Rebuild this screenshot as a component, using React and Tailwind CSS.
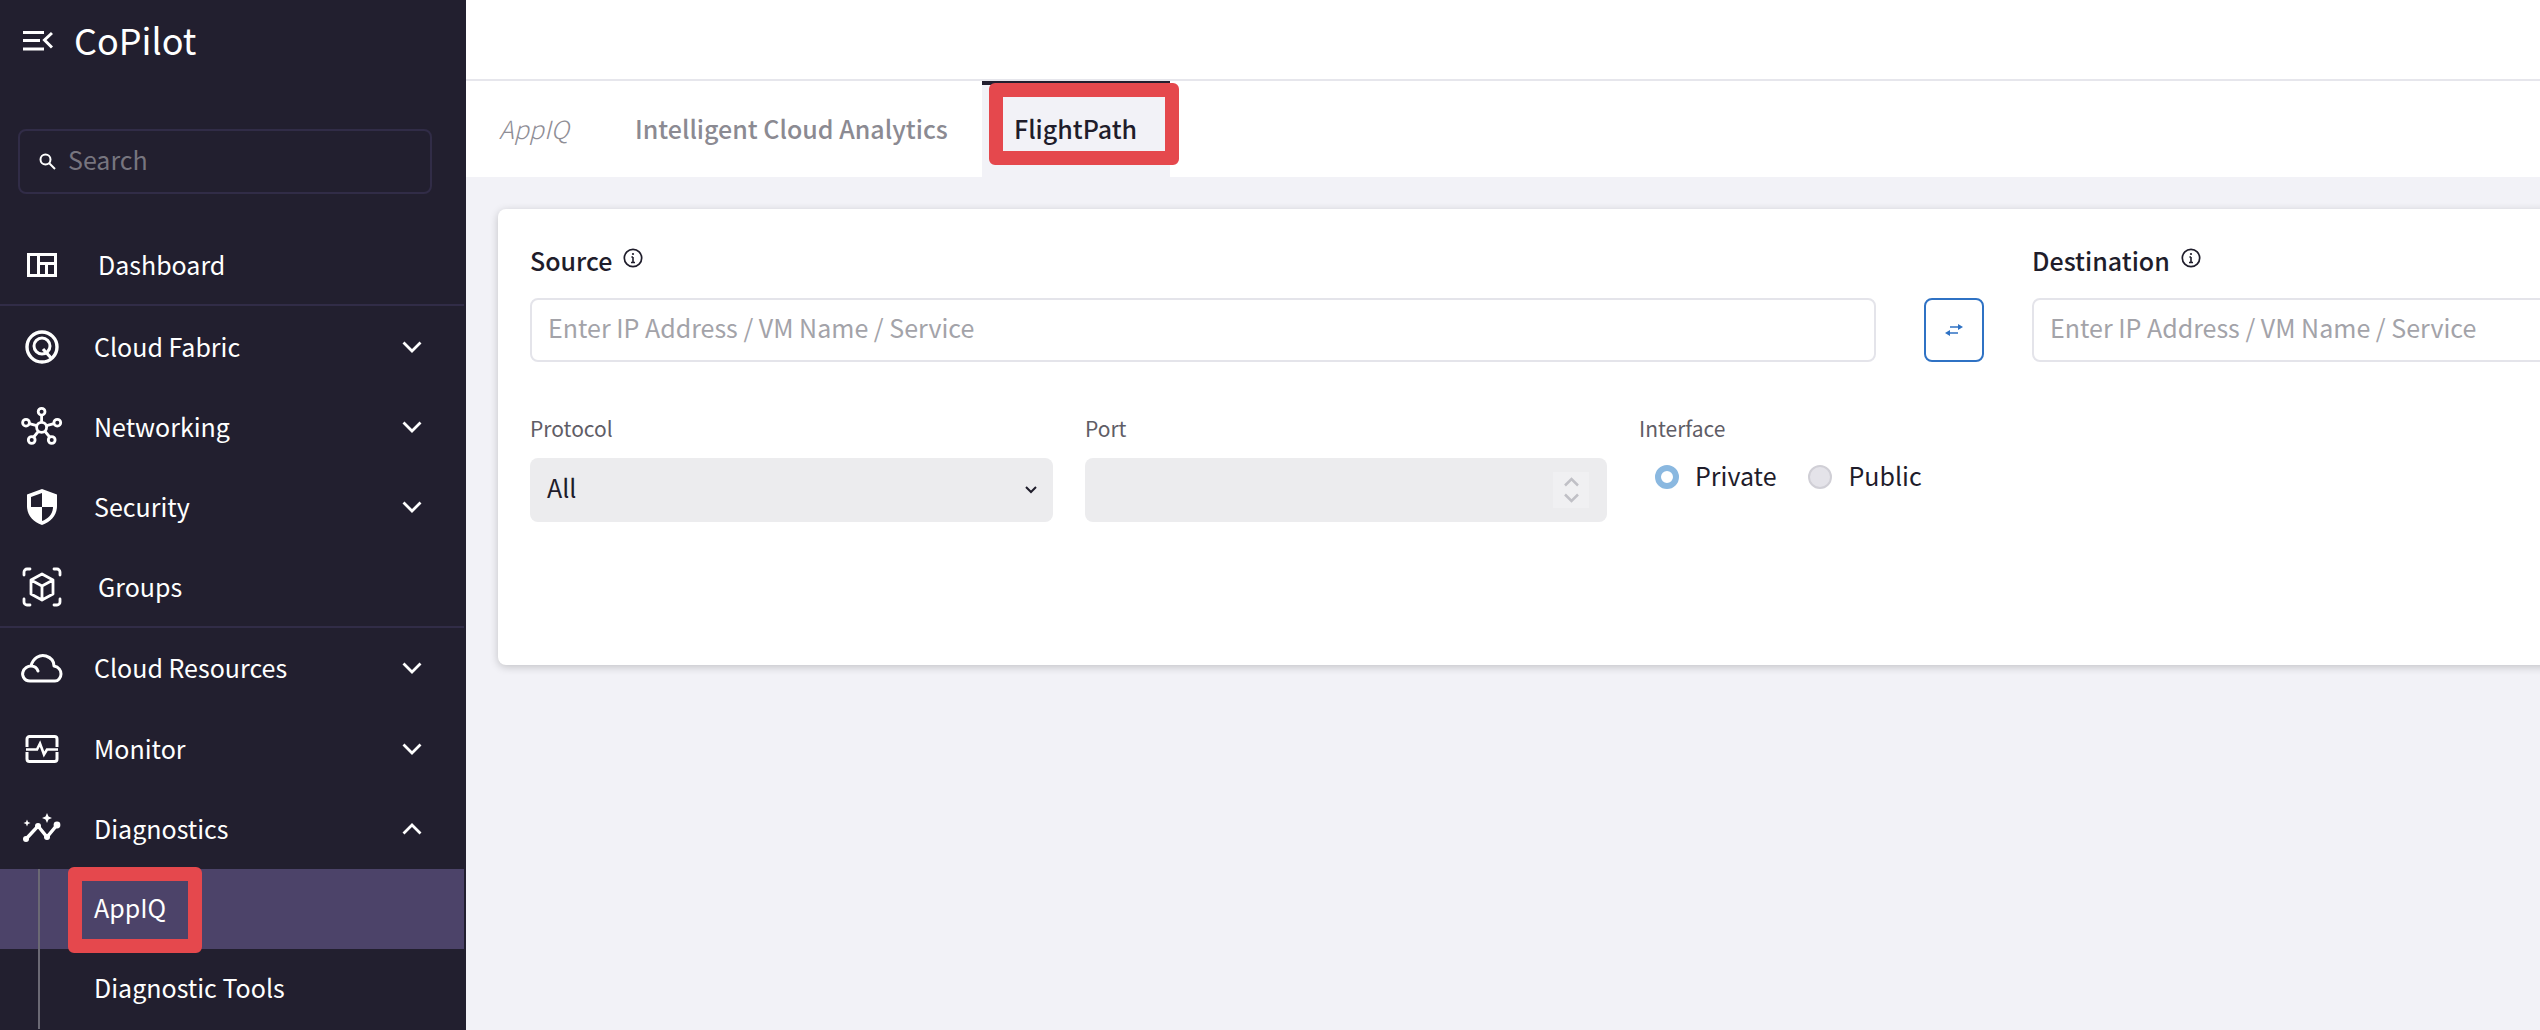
import React from "react";

const font = { fontFamily: '"Noto Sans CJK SC", "Noto Sans", sans-serif' };

const Chevron = ({ up }) => (
  <svg width="20" height="14" viewBox="0 0 20 14" fill="none" stroke="#fff" strokeWidth="2.8" className="absolute right-[42px] top-1/2 -translate-y-1/2">
    {up ? <path d="M1.5 11.5 L10 3 L18.5 11.5" /> : <path d="M1.5 2.5 L10 11 L18.5 2.5" />}
  </svg>
);

const I = ({ children }) => (
  <svg width="44" height="44" viewBox="0 0 44 44" fill="none" stroke="#fff" strokeWidth="3" className="absolute left-[20px] top-1/2 -translate-y-1/2">
    {children}
  </svg>
);

const DashboardIcon = () => (
  <I>
    <path fillRule="evenodd" stroke="none" fill="#fff" d="M7 10h30v24H7z M10 13v18h7V13z M20 13v6h14v-6z M20 22v9h5v-9z M28 22v9h6v-9z" />
  </I>
);
const FabricIcon = () => (
  <I>
    <circle cx="22" cy="22" r="15" strokeWidth="3.4" />
    <circle cx="22" cy="21" r="8" strokeWidth="3" />
    <path d="M23 24 L32 34" strokeWidth="3.2" />
  </I>
);
const NetworkIcon = () => (
  <I>
    <g strokeWidth="2.8">
      <circle cx="21.6" cy="22.3" r="5" />
      <circle cx="21.6" cy="6.7" r="3.4" />
      <circle cx="6" cy="17.7" r="3.4" />
      <circle cx="37.3" cy="17.7" r="3.4" />
      <circle cx="11.7" cy="35" r="3.4" />
      <circle cx="31.7" cy="35" r="3.4" />
      <path d="M21.6 10v7M9.3 18.7l7.5 2M34 18.7l-7.5 2M13.7 32l5-6M29.7 32l-5-6" />
    </g>
  </I>
);
const ShieldIcon = () => (
  <I>
    <path fillRule="evenodd" stroke="none" fill="#fff" d="M22 4 L37 9.5 V21 C37 30 31 37 22 40 C13 37 7 30 7 21 V9.5 Z M22 8 L11 12 V22 H22 Z M22 22 V36 C28 34 33 29 33 22 Z" />
  </I>
);
const GroupsIcon = () => (
  <I>
    <g strokeWidth="2.8" strokeLinecap="round">
      <path d="M4 10V7a3 3 0 0 1 3-3h3M34 4h3a3 3 0 0 1 3 3v3M40 34v3a3 3 0 0 1-3 3h-3M10 40H7a3 3 0 0 1-3-3v-3" />
      <path d="M22 9l11 6v14l-11 6-11-6V15zM11 15l11 6 11-6M22 21v14" strokeLinejoin="round" />
    </g>
  </I>
);
const CloudIcon = () => (
  <I>
    <path strokeWidth="3" strokeLinejoin="round" strokeLinecap="round" d="M10 35 C3 35 2 28 3 26 C4 22 8 20 11 20 C13 12 20 8 26 10 C32 12 34 16 34 20 C39 21 41 25 41 28 C41 32 38 35 35 35 Z M11 20 C14 20 17 22 18 25" />
  </I>
);
const MonitorIcon = () => (
  <I>
    <path strokeWidth="3" d="M7 20V12a2.5 2.5 0 0 1 2.5-2.5h25A2.5 2.5 0 0 1 37 12v8" />
    <path strokeWidth="3" d="M7 25v7a2.5 2.5 0 0 0 2.5 2.5h25A2.5 2.5 0 0 0 37 32v-7" />
    <path strokeWidth="2.6" d="M6 22.5h11l3-6 4 11 3-5h11" />
  </I>
);
const DiagIcon = () => (
  <I>
    <path strokeWidth="3.4" d="M6 32 L18 19 L27 30 L37 18" />
    <g stroke="none" fill="#fff">
      <circle cx="6" cy="32" r="3" />
      <circle cx="18" cy="19" r="3" />
      <circle cx="27" cy="30" r="3" />
      <circle cx="37" cy="18" r="3.4" />
      <path d="M27 6 L28.5 9.5 L32 11 L28.5 12.5 L27 16 L25.5 12.5 L22 11 L25.5 9.5 Z" />
      <path d="M7 12.5 L8 15 L10.5 16 L8 17 L7 19.5 L6 17 L3.5 16 L6 15 Z" />
    </g>
  </I>
);

const Item = ({ label, icon, chevron, up, x = 94, border, h = "h-[80px]" }) => (
  <div className={`relative ${h} w-full shrink-0 flex items-center ${border ? "border-b-2 border-[#312c47]" : ""}`}>
    {icon}
    <span className="text-[25px] leading-[34px] text-white pb-[2px]" style={{ marginLeft: x }}>{label}</span>
    {chevron && <Chevron up={up} />}
  </div>
);

const Info = () => (
  <svg width="20" height="20" viewBox="0 0 20 20" fill="none" stroke="#1f1d2b" className="ml-[11px] mt-[-4px]">
    <circle cx="10" cy="10" r="8.7" strokeWidth="1.7" />
    <path d="M10 9v5.5M8 14.5h4M8.4 9H10" strokeWidth="1.6" />
    <circle cx="10" cy="6" r="1.1" fill="#1f1d2b" stroke="none" />
  </svg>
);

const Field = ({ label }) => (
  <div className="flex flex-col w-[1346px] shrink-0">
    <div className="flex items-center h-[34px] pb-[2px] text-[25px] leading-[32px] font-medium text-[#1f1d2b]">
      {label}
      <Info />
    </div>
    <div className="mt-[20px] h-[64px] rounded-[8px] border-2 border-[#e4e4ea] flex items-center pl-[16px] pb-[4px] text-[25px] text-[#a3a3a9]">
      Enter IP Address / VM Name / Service
    </div>
  </div>
);

const Small = ({ children }) => (
  <div className="h-[32px] leading-[26px] text-[21px] text-[#5f5d66]">{children}</div>
);

export default function App() {
  return (
    <div className="flex h-[1030px] w-[2540px] overflow-hidden bg-[#f2f2f7]" style={font}>
      <aside className="relative w-[466px] shrink-0 bg-[#221f2f] flex flex-col overflow-hidden">
        <div className="flex items-center h-[82px] pl-[23px]">
          <svg width="30" height="20" viewBox="0 0 30 20" fill="none" stroke="#fff" strokeWidth="3">
            <path d="M0 1.5h21M0 9.5h17M0 18h21M29 2l-7.5 7 7.5 7.5" />
          </svg>
          <span className="ml-[21px] text-[36px] leading-[46px] text-white pb-[4px]">CoPilot</span>
        </div>
        <div className="mt-[47px] mx-[18px] h-[65px] w-[414px] rounded-[8px] border-2 border-[#312c47] flex items-center pl-[19px]">
          <svg width="17" height="17" viewBox="0 0 17 17" fill="none" stroke="#fff" strokeWidth="2">
            <circle cx="6.5" cy="6.5" r="5" />
            <path d="M10 10l6 6" />
          </svg>
          <span className="ml-[12px] text-[25px] text-[#77757f] pb-[4px]">Search</span>
        </div>
        <div className="mt-[32px] w-[464px] flex flex-col">
          <Item label="Dashboard" icon={<DashboardIcon />} x={98} border />
          <Item label="Cloud Fabric" icon={<FabricIcon />} chevron h="h-[81px]" />
          <Item label="Networking" icon={<NetworkIcon />} chevron />
          <Item label="Security" icon={<ShieldIcon />} chevron />
          <Item label="Groups" icon={<GroupsIcon />} x={98} border h="h-[81px]" />
          <Item label="Cloud Resources" icon={<CloudIcon />} chevron />
          <Item label="Monitor" icon={<MonitorIcon />} chevron h="h-[81px]" />
          <Item label="Diagnostics" icon={<DiagIcon />} chevron up />
          <div className="relative flex flex-col">
            <div className="h-[80px] bg-[#4c4369] flex items-center pl-[94px] pb-[2px] text-[25px] text-white">AppIQ</div>
            <div className="h-[80px] flex items-center pl-[94px] pb-[2px] text-[25px] text-white">Diagnostic Tools</div>
            <div className="absolute left-[38px] top-0 bottom-0 w-[2px] bg-[#6b6974]" />
          </div>
        </div>
        <div className="absolute left-[68px] top-[867px] w-[134px] h-[86px] rounded-[6px] border-[14px] border-[#e5484d]" />
      </aside>
      <main className="flex-1 min-w-0 flex flex-col">
        <div className="h-[81px] shrink-0 bg-white border-b-2 border-[#e6e6ec]" />
        <div className="relative h-[96px] shrink-0 bg-white flex items-center text-[25px] leading-[34px]">
          <span className="ml-[33px] w-[73px] italic font-light text-[#8f8e96] pb-[3px]">AppIQ</span>
          <span className="ml-[63px] w-[314px] font-medium text-[#8b8a92] whitespace-nowrap pb-[3px]">Intelligent Cloud Analytics</span>
          <div className="ml-[33px] h-full w-[188px] bg-[#f2f2f7] border-t-4 border-[#221f2f] flex items-center pl-[32px] pb-[7px] font-medium text-[#1f1d2b]">
            FlightPath
          </div>
          <div className="absolute left-[523px] top-[2px] w-[190px] h-[82px] rounded-[6px] border-[14px] border-[#e5484d]" />
        </div>
        <div className="mt-[32px] ml-[32px] w-[2900px] h-[456px] shrink-0 bg-white rounded-[8px] shadow-[0_2px_8px_rgba(0,0,0,0.2)] pl-[32px] pt-[35px]">
          <div className="flex">
            <Field label="Source" />
            <div className="mt-[54px] ml-[48px] h-[64px] w-[60px] rounded-[8px] border-2 border-[#2f72c4] flex items-center justify-center">
              <svg width="18" height="14" viewBox="0 0 18 14" fill="#2f72c4" stroke="none">
                <path d="M5 3.2h8V1l5 3-5 3V4.8H5z" />
                <path d="M13 9.2H5V7L0 10l5 3v-2.2h8z" />
              </svg>
            </div>
            <div className="ml-[48px]"><Field label="Destination" /></div>
          </div>
          <div className="flex mt-[53px]">
            <div className="w-[523px]">
              <Small>Protocol</Small>
              <div className="mt-[11px] h-[64px] rounded-[8px] bg-[#ececee] flex items-center justify-between pl-[17px] pr-[16px] text-[25px] text-[#1f1d2b]">
                <span className="pb-[4px]">All</span>
                <svg width="12" height="8" viewBox="0 0 12 8" fill="none" stroke="#1f1d2b" strokeWidth="2"><path d="M1 1l5 5 5-5" /></svg>
              </div>
            </div>
            <div className="w-[522px] ml-[32px]">
              <Small>Port</Small>
              <div className="mt-[11px] h-[64px] rounded-[8px] bg-[#ececee] flex items-center justify-end pr-[18px]">
                <div className="w-[36px] h-[36px] bg-[#f0f0f2] flex items-center justify-center">
                  <svg width="15" height="26" viewBox="0 0 15 26" fill="none" stroke="#c0c0c6" strokeWidth="2.5"><path d="M1 8.5l6.5-6.5 6.5 6.5M1 17.5l6.5 6.5 6.5-6.5" /></svg>
                </div>
              </div>
            </div>
            <div className="ml-[32px]">
              <Small>Interface</Small>
              <div className="mt-[11px] flex items-center pl-[16px] text-[25px] leading-[34px] text-[#1f1d2b]">
                <span className="w-[24px] h-[24px] rounded-full border-[6px] border-[#8ab8e0] bg-white" />
                <span className="ml-[16px] pb-[3px]">Private</span>
                <span className="ml-[32px] w-[24px] h-[24px] rounded-full border-2 border-[#d0cfd6] bg-[#e4e3e9]" />
                <span className="ml-[16px] pb-[3px]">Public</span>
              </div>
            </div>
          </div>
        </div>
      </main>
    </div>
  );
}
